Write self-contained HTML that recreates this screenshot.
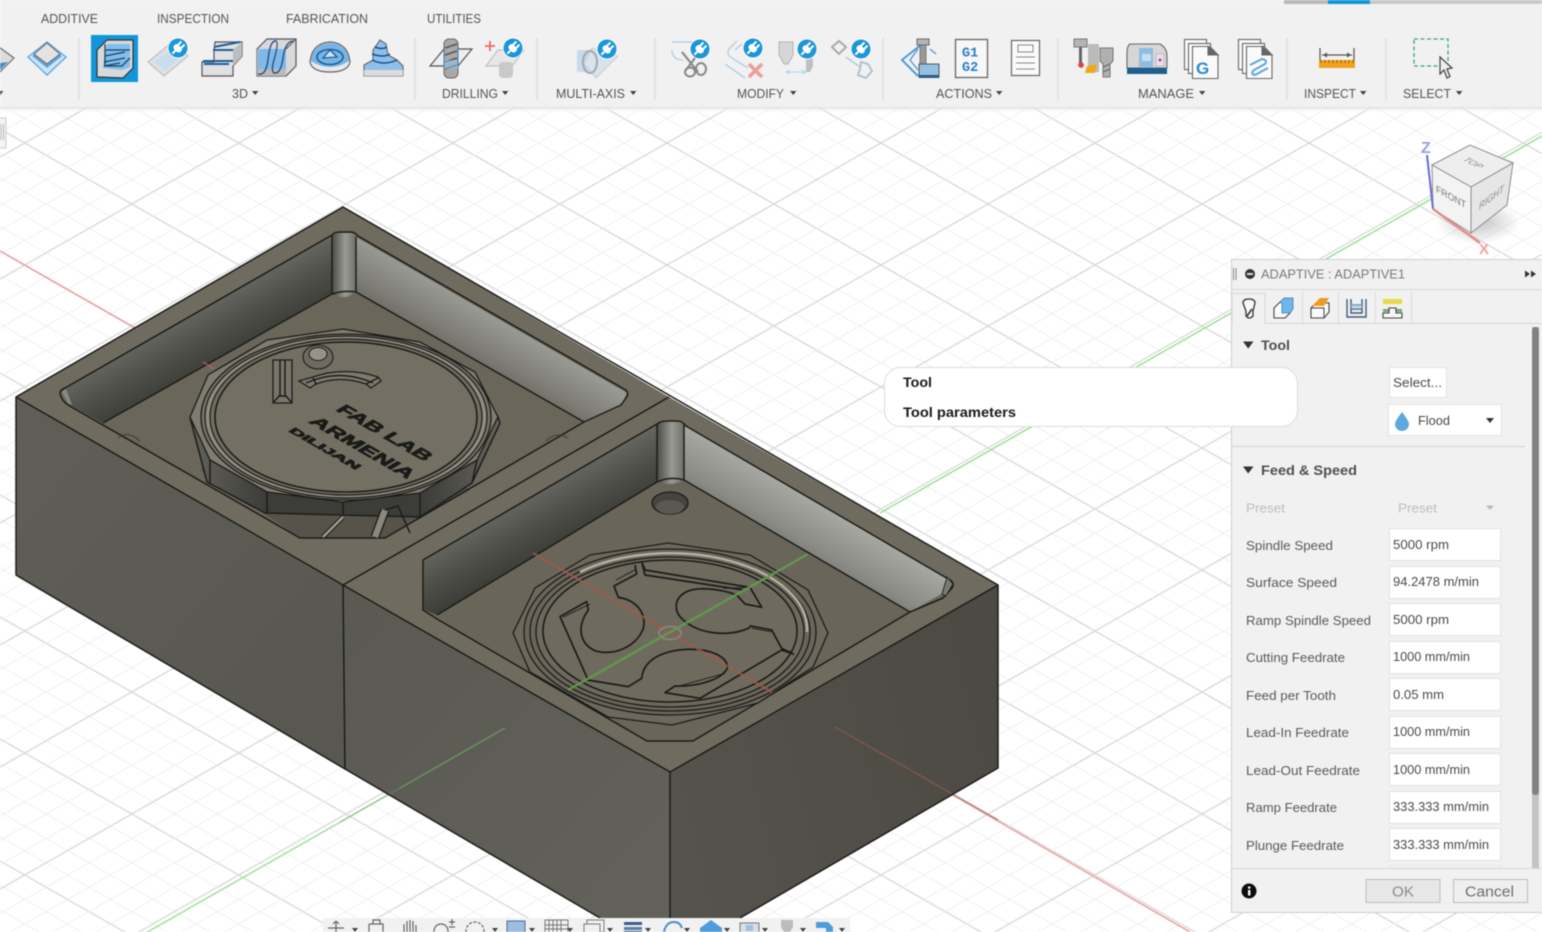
<!DOCTYPE html>
<html lang="en"><head><meta charset="utf-8"><title>ADAPTIVE</title>
<style>
html,body{margin:0;padding:0;width:1542px;height:932px;overflow:hidden;background:#fff}
svg{display:block;filter:blur(.55px)}
text{font-family:"Liberation Sans",sans-serif}
.tb{font-size:13px;fill:#555}
.lb{font-size:12.5px;fill:#5a5a5a}
.val{font-size:12.5px;fill:#4a4a4a}
.e{stroke:#1c1c1a;stroke-width:1.5;fill:none;stroke-linejoin:round}
.i{stroke:#555;stroke-width:1.2;stroke-linejoin:round}
</style></head><body>
<svg xmlns="http://www.w3.org/2000/svg" width="1542" height="932" viewBox="0 0 1542 932">
<defs>
<pattern id="ga" patternUnits="userSpaceOnUse" width="10" height="122" patternTransform="translate(1095,143) skewY(29.68)">
<g stroke="#f0f0f0" stroke-width="1.1"><path d="M0 24.4H10M0 48.8H10M0 73.2H10M0 97.6H10"/></g><path d="M0 0H10M0 122H10" stroke="#d8d8d8" stroke-width="1.5"/></pattern>
<pattern id="gb" patternUnits="userSpaceOnUse" width="10" height="122" patternTransform="translate(1095,143) skewY(-29.68)">
<g stroke="#f0f0f0" stroke-width="1.1"><path d="M0 24.4H10M0 48.8H10M0 73.2H10M0 97.6H10"/></g><path d="M0 0H10M0 122H10" stroke="#d8d8d8" stroke-width="1.5"/></pattern>
<linearGradient id="fl" gradientUnits="userSpaceOnUse" x1="16" y1="420" x2="345" y2="700"><stop offset="0" stop-color="#5f5f57"/><stop offset="1" stop-color="#585850"/></linearGradient>
<linearGradient id="fm" gradientUnits="userSpaceOnUse" x1="345" y1="600" x2="670" y2="900"><stop offset="0" stop-color="#5a5a52"/><stop offset="1" stop-color="#62625a"/></linearGradient>
<linearGradient id="fr" gradientUnits="userSpaceOnUse" x1="670" y1="780" x2="998" y2="700"><stop offset="0" stop-color="#55534b"/><stop offset="1" stop-color="#4c4a43"/></linearGradient>
<linearGradient id="wl" gradientUnits="userSpaceOnUse" x1="190" y1="300" x2="225" y2="362"><stop offset="0" stop-color="#70706a"/><stop offset=".55" stop-color="#50504a"/><stop offset="1" stop-color="#3c3c37"/></linearGradient>
<linearGradient id="wr" gradientUnits="userSpaceOnUse" x1="490" y1="312" x2="455" y2="372"><stop offset="0" stop-color="#9c9c96"/><stop offset=".55" stop-color="#7c7c75"/><stop offset="1" stop-color="#5c5b52"/></linearGradient>
<linearGradient id="wl2" gradientUnits="userSpaceOnUse" x1="516" y1="490" x2="551" y2="552"><stop offset="0" stop-color="#70706a"/><stop offset=".55" stop-color="#50504a"/><stop offset="1" stop-color="#3c3c37"/></linearGradient>
<linearGradient id="wr2" gradientUnits="userSpaceOnUse" x1="816" y1="502" x2="781" y2="562"><stop offset="0" stop-color="#a8a8a2"/><stop offset=".55" stop-color="#8c8c86"/><stop offset="1" stop-color="#6c6b63"/></linearGradient>
<linearGradient id="fil" x1="0" x2="1" y1="0" y2="0"><stop offset="0" stop-color="#4b4b46"/><stop offset=".55" stop-color="#9a9a94"/><stop offset="1" stop-color="#6f6f68"/></linearGradient>
<linearGradient id="sk" gradientUnits="userSpaceOnUse" x1="188" y1="0" x2="500" y2="0"><stop offset="0" stop-color="#65645c"/><stop offset=".25" stop-color="#3c3c38"/><stop offset=".75" stop-color="#3c3c38"/><stop offset="1" stop-color="#65645c"/></linearGradient>
<radialGradient id="shad" cx=".5" cy=".5" r=".5"><stop offset="0" stop-color="#aaa" stop-opacity=".7"/><stop offset="1" stop-color="#aaa" stop-opacity="0"/></radialGradient>
<linearGradient id="tbs" x1="0" x2="0" y1="0" y2="1"><stop offset="0" stop-color="#ddd"/><stop offset="1" stop-color="#fff" stop-opacity="0"/></linearGradient>
<g id="plug"><circle r="10.5" fill="#fff" opacity=".8"/><circle r="9.5" fill="#1b96d6"/><g transform="rotate(45)" fill="#fff"><rect x="-4.5" y="-2.5" width="9" height="6" rx="2.5"/><rect x="-3.2" y="-7" width="2" height="5"/><rect x="1.2" y="-7" width="2" height="5"/><rect x="-1" y="3" width="2" height="5"/></g></g>
<path id="tri" d="M0 0h6.4l-3.2 4z" fill="#444"/>
</defs>

<!-- grid -->
<rect width="1542" height="932" fill="#fff"/>
<rect width="1542" height="932" fill="url(#ga)"/>
<rect width="1542" height="932" fill="url(#gb)"/>
<path d="M1542 136L880 513" stroke="#9ee29a" stroke-width="1.6"/>
<path d="M835 727L1190 932" stroke="#eda3a3" stroke-width="1.6"/>
<path d="M0 251L135 328" stroke="#eaa0a6" stroke-width="1.6"/>
<path d="M400 788L130 942" stroke="#a8e0a2" stroke-width="1.6"/>

<!-- model -->
<g>
<polygon points="16,397 343,585 345,769 16,575" fill="url(#fl)"/>
<polygon points="343,585 670,772 670,918 600,918 345,769" fill="url(#fm)"/>
<polygon points="670,772 998,585 998,768 740,918 670,918" fill="url(#fr)"/>
<polygon points="16,397 343,207 669,397 998,585 670,772 343,585" fill="#6f6b5f"/>
<path d="M505 728L400 788" stroke="#6fa85f" stroke-width="1.5" opacity=".7"/>
<path d="M400 788L340 822" stroke="#7a9a6c" stroke-width="1.3" opacity=".4"/>
<path d="M835 727L998 820" stroke="#9c5a50" stroke-width="1.5" opacity=".6"/>

<!-- left pocket -->
<polygon points="60,393 65,388 332,234 356,234 627,393 621,405 584,422 521,460 385,538 300,538 111,429 68,405" fill="#6b665a"/>
<polygon points="300,538 385,538 470,490 360,395 200,470" fill="#57534a"/>
<polygon points="66,388 332,236 332,294 103,423 70,405" fill="url(#wl)"/>
<polygon points="356,237 627,393 621,405 584,422 356,292" fill="url(#wr)"/>
<path d="M332 236Q333 233 340 233H350Q355 233 356 237V292Q350 297 344 297Q335 297 332 294Z" fill="url(#fil)"/>
<path class="e" d="M60 393Q60 390 65 388L332 235Q334 232 340 232H350Q355 232 358 236L624 389Q630 392 626 398L621 405 584 422 385 538H300L68 405Q61 400 60 393Z"/>
<path class="e" d="M332 235V294M356 237V292M103 423L332 294Q344 290 356 292L584 422"/>
<path d="M68 403L62 392 66 389 72 405Z" fill="#8a8a84"/>
<path d="M118 438Q128 430 140 441" fill="none" stroke="#3a3a36" stroke-width="1"/>
<path d="M546 441Q556 431 568 438" fill="none" stroke="#3a3a36" stroke-width="1"/>
<!-- left coin -->
<polygon points="188,420 208,375 267,340 343,329 420,342 475,372 500,423 472,483 420,517 343,514 265,513 207,482" fill="url(#sk)"/>
<path class="e" stroke-width="1.2" d="M190 417L207 482M210 460V484M267 492V514M343 502V515M420 493V517M477 460L472 483M498 417L500 423M207 482L265 513 343 515 420 517 472 483 500 423"/>
<path d="M323 537L343 517" stroke="#1c1c1a" stroke-width="4.5"/><path d="M323 537L343 517" stroke="#a09c90" stroke-width="2.6"/>
<path d="M375 537L385 510" stroke="#1c1c1a" stroke-width="9"/><path d="M375 537L385 510" stroke="#8a877b" stroke-width="6.4"/>
<path class="e" stroke-width="1.2" d="M385 510L398 506 410 533"/>
<polygon points="190,417 208,375 267,340 343,329 420,342 475,372 498,417 477,460 420,493 343,502 267,492 210,460" fill="#7f7c70" stroke="#1c1c1a" stroke-width="1.3"/>
<ellipse cx="346" cy="417" rx="145" ry="83" fill="#757164" stroke="#1c1c1a" stroke-width="1.3"/>
<ellipse cx="346" cy="417" rx="141" ry="81" fill="#8f8c80" stroke="#1c1c1a" stroke-width="1.2"/>
<ellipse cx="346" cy="417" rx="136" ry="78" fill="#716d60" stroke="#1c1c1a" stroke-width="1.2"/>
<ellipse cx="346" cy="417" rx="131" ry="75" fill="#736f63" stroke="#1c1c1a" stroke-width="1.6"/>
<ellipse cx="318" cy="357" rx="15" ry="12" fill="#6e6a5f" stroke="#1c1c1a" stroke-width="1.1"/>
<ellipse cx="318" cy="354" rx="9" ry="6.5" fill="#96928a" stroke="#1c1c1a" stroke-width="1"/>
<path d="M273 360H292V403H273Z" fill="#79756a" stroke="#1c1c1a" stroke-width="1.3"/>
<path class="e" stroke-width="1" d="M280 360V397M285 360V397M273 403L279 396H286L292 403"/>
<path d="M299 381L313 377Q345 366 378 377L381 381 371 388 366 384Q340 375 316 384L310 388Z" fill="#7e7a6e" stroke="#1c1c1a" stroke-width="1.3"/>
<path class="e" stroke-width="1" d="M313 378L316 384M378 378L366 384M306 383Q340 368 373 383"/>
<g fill="#1a1a18" font-weight="700" stroke="#1a1a18" stroke-width="1">
<text transform="matrix(.87,.5,-.72,.42,335,410)" font-size="21" textLength="103" lengthAdjust="spacingAndGlyphs">FAB LAB</text>
<text transform="matrix(.87,.5,-.72,.42,308,422)" font-size="21" textLength="114" lengthAdjust="spacingAndGlyphs">ARMENIA</text>
<text transform="matrix(.87,.5,-.72,.42,288,431)" font-size="13" textLength="78" lengthAdjust="spacingAndGlyphs">DILIJAN</text>
</g>
<path d="M203 362L214 369" stroke="#c0606a" stroke-width="1.5" opacity=".8"/>

<!-- right pocket -->
<polygon points="423,560 657,424 683,424 953,583 947,595 910,612 693,741 647,741 437,619 423,611" fill="#6a6559"/>
<polygon points="423,560 657,425 657,482 437,615 423,609" fill="url(#wl2)"/>
<polygon points="683,425 947,578 943,593 910,612 683,480" fill="url(#wr2)"/>
<path d="M657 425Q660 421 668 421H678Q682 421 684 425V480Q676 484 670 484Q662 484 657 482Z" fill="url(#fil)"/>
<path class="e" d="M423 560L657 424Q660 421 668 421H678Q682 421 686 426L950 580Q955 583 952 588L943 598 910 612 693 741H647L437 619 423 610Z"/>
<path class="e" d="M657 424V482M684 425V480M437 615L657 482Q670 476 684 480L910 612"/>
<path d="M947 577L953 584 946 596 942 594Z" fill="#7a7a72" stroke="#1c1c1a" stroke-width=".9"/>
<ellipse cx="670" cy="503" rx="18" ry="11" fill="#45443f" stroke="#1c1c1a" stroke-width="1.3"/>
<ellipse cx="670" cy="507" rx="14" ry="7" fill="#5a5850"/>
<!-- right coin -->
<polygon points="513,633 535,588 590,555 668,543 750,555 808,590 828,633 813,667 758,703 672,725 608,717 530,672" fill="#6d685c" stroke="#1c1c1a" stroke-width="1.3"/>
<ellipse cx="670" cy="632" rx="146" ry="83" fill="#6a6559" stroke="#1c1c1a" stroke-width="1.3"/>
<ellipse cx="670" cy="632" rx="140" ry="79" fill="none" stroke="#1c1c1a" stroke-width="1.3"/>
<path d="M580 572A137 76 0 0 1 807 632" fill="none" stroke="#b5b1a4" stroke-width="2.4"/>
<ellipse cx="670" cy="632" rx="134" ry="75" fill="#6e695d" stroke="#1c1c1a" stroke-width="1.3"/>
<ellipse cx="670" cy="631" rx="127" ry="71" fill="#6f6a5e" stroke="#1c1c1a" stroke-width="1.6"/>
<g transform="translate(480,500) scale(.33333)" fill="none" stroke="#1c1c1a" stroke-width="5.2" stroke-linejoin="round">
<path d="M465 195L470 222 402 258 415 292C470 300 500 340 490 385C470 440 400 470 345 452C300 432 288 380 325 330L320 305 240 350 322 535"/>
<path d="M322 540L445 560 485 535C490 480 545 452 620 448C690 445 745 470 742 505C720 545 640 560 585 558L555 578 660 595 880 465 905 450 940 462 905 445 875 390 812 378 805 385C750 410 660 405 610 360C580 335 580 295 620 275C650 260 720 265 770 285L795 312 845 322 810 262 495 210 485 185 495 225 790 270"/>
<path stroke-width="2.8" d="M248 352L330 312M468 208L408 240M310 545L330 535M590 560L735 520M815 385L875 395M905 450L935 455M730 265L805 262"/>
</g>
<path d="M533 553L772 692" stroke="#a3594a" stroke-width="2.2" opacity=".75"/>
<path d="M808 554L568 690" stroke="#5f9f4c" stroke-width="2.4" opacity=".9"/>
<ellipse cx="670" cy="633" rx="11" ry="6.5" fill="none" stroke="#8a8276" stroke-width="2"/>

<!-- body edges -->
<path class="e" d="M16 397L343 207 998 585 670 772 343 585 16 397V575L345 769 600 918M343 585L345 769M670 772V918M998 585V768L740 918M343 585L669 397"/>
</g>

<!-- toolbar -->
<rect y="107" width="1542" height="6" fill="url(#tbs)"/>
<rect width="1542" height="107" fill="#f1f1f1"/>
<rect x="1284" y="0" width="44" height="4" fill="#b9b9b9"/><rect x="1328" y="0" width="42" height="4" fill="#0f96d9"/><rect x="1370" y="0" width="172" height="4" fill="#c9c9c9"/>
<g stroke="#e0e0e0" stroke-width="1.5"><path d="M79 38V100M415 38V100M537 38V100M655 38V100M883 38V100M1058 38V100M1287 38V100M1386 38V100"/></g>

<text class="tb" x="41" y="23" textLength="57" lengthAdjust="spacingAndGlyphs">ADDITIVE</text>
<text class="tb" x="157" y="23" textLength="72" lengthAdjust="spacingAndGlyphs">INSPECTION</text>
<text class="tb" x="286" y="23" textLength="82" lengthAdjust="spacingAndGlyphs">FABRICATION</text>
<text class="tb" x="427" y="23" textLength="54" lengthAdjust="spacingAndGlyphs">UTILITIES</text>
<text class="tb" x="232" y="98" textLength="16" lengthAdjust="spacingAndGlyphs">3D</text><use href="#tri" x="252" y="91"/>
<text class="tb" x="442" y="98" textLength="56" lengthAdjust="spacingAndGlyphs">DRILLING</text><use href="#tri" x="502" y="91"/>
<text class="tb" x="556" y="98" textLength="69" lengthAdjust="spacingAndGlyphs">MULTI-AXIS</text><use href="#tri" x="630" y="91"/>
<text class="tb" x="737" y="98" textLength="47" lengthAdjust="spacingAndGlyphs">MODIFY</text><use href="#tri" x="790" y="91"/>
<text class="tb" x="936" y="98" textLength="56" lengthAdjust="spacingAndGlyphs">ACTIONS</text><use href="#tri" x="996" y="91"/>
<text class="tb" x="1138" y="98" textLength="56" lengthAdjust="spacingAndGlyphs">MANAGE</text><use href="#tri" x="1199" y="91"/>
<text class="tb" x="1304" y="98" textLength="52" lengthAdjust="spacingAndGlyphs">INSPECT</text><use href="#tri" x="1360" y="91"/>
<text class="tb" x="1403" y="98" textLength="48" lengthAdjust="spacingAndGlyphs">SELECT</text><use href="#tri" x="1456" y="91"/>
<use href="#tri" x="-3" y="91"/>

<!-- icon: clipped cube at left -->
<polygon points="-8,42 14,58 -2,74 -14,60" fill="#dcdcdc" stroke="#666" stroke-width="1.1"/>
<polygon points="-6,64 8,62 0,70" fill="#3b8fcf"/>
<!-- diamond -->
<polygon points="28,57 47,75 66,57 47,42" fill="#cfe5f7" stroke="#5fabe4" stroke-width="1.4"/>
<polygon points="32,56 47,68 62,56 47,44" fill="#5aa5e0"/>
<polygon points="34,54 47,64 60,54 47,43" fill="#e3e3e3" stroke="#666" stroke-width="1"/>
<!-- selected -->
<rect x="91" y="35" width="47" height="47" fill="#1296d8"/>
<polygon points="97,50 107,40 133,40 133,68 123,78 97,77" fill="#d9d9d9" stroke="#333" stroke-width="1.2"/>
<polygon points="107,44 130,44 130,67 122,70 103,68 105,52" fill="#7fbfee"/>
<path d="M105 44V66H122L130 58M106 50H130M105 56L125 52M104 62L125 58M104 66L120 63" stroke="#1e3f66" stroke-width="1.3" fill="none"/>
<!-- plug icon faded -->
<g opacity=".55"><polygon points="148,62 172,42 188,56 164,76" fill="#cbd5dd" stroke="#8a8a8a" stroke-width="1"/><polygon points="155,62 170,50 180,58 165,70" fill="#a9cee9"/></g>
<use href="#plug" x="178" y="48"/>
<!-- stairs -->
<polygon points="215,42 242,42 242,56 233,66 233,76 202,76 202,62 214,62 214,50" fill="#e1e1e1" stroke="#555" stroke-width="1.2"/>
<path d="M214 47L240 42M213 50H238M204 64H229M203 61H233" stroke="#1d5f9e" stroke-width="2" fill="none"/>
<polygon points="233,50 242,42 242,56 233,66" fill="#bdbdbd"/>
<!-- parallel -->
<polygon points="257,49 267,39 296,39 296,66 286,76 257,76" fill="#d9d9d9" stroke="#555" stroke-width="1.2"/>
<polygon points="257,49 286,49 286,76 257,76" fill="#bbb"/>
<polygon points="258,49 286,49 286,69 258,69" fill="#7fb9e8"/>
<path d="M258 74Q266 76 268 60Q270 40 276 41Q279 42 274 60Q270 74 276 73Q281 72 283 58Q285 42 293 41" stroke="#1f4a7a" stroke-width="1.3" fill="none"/>
<path d="M286 49L296 39" stroke="#555" stroke-width="1.1"/>
<!-- dome -->
<path d="M310 62Q312 43 330 42Q348 43 350 62Q348 72 330 72Q312 72 310 62Z" fill="#e9e9e9" stroke="#666" stroke-width="1.2"/>
<path d="M311 61Q313 44 330 43Q347 44 349 61Q340 67 330 67Q320 67 311 61Z" fill="#77b4e6"/>
<ellipse cx="330" cy="57" rx="13" ry="7.5" fill="none" stroke="#1f5c98" stroke-width="1.6"/>
<path d="M330 50L337 57 323 58Z" fill="#cfe3f5" stroke="#1f5c98" stroke-width="1.3"/>
<!-- pyramid -->
<polygon points="364,76 364,65 373,60 373,50 380,40 386,44 388,55 397,60 403,66 403,76" fill="#8fc0ea" stroke="#666" stroke-width="1.1"/>
<polygon points="364,70 403,70 403,76 364,76" fill="#dcdcdc"/>
<path d="M372 60Q384 66 397 60M372 54Q384 58 390 54M375 47Q382 50 387 47" stroke="#164f8a" stroke-width="1.5" fill="none"/>
<!-- drill -->
<polygon points="430,66 444,49 472,49 458,66" fill="#eee" stroke="#555" stroke-width="1.2"/>
<rect x="444" y="39" width="14" height="39" rx="5" fill="#a9a9a9" stroke="#666" stroke-width="1"/>
<path d="M445 48L457 44M445 55L457 51M445 62L457 58M445 69L457 65" stroke="#555" stroke-width="1.5"/>
<rect x="444" y="60" width="14" height="9" fill="#8ec2ec" opacity=".55"/>
<path d="M444 51V66M458 49V66" stroke="#2b7fc2" stroke-width="1"/>
<!-- plus plug -->
<g opacity=".55"><polygon points="486,66 498,50 524,50 512,66" fill="#e0e0e0" stroke="#888"/><rect x="499" y="62" width="14" height="16" rx="4" fill="#aaa"/></g>
<path d="M490 41V51M485 46H495" stroke="#ea6b6b" stroke-width="1.8"/>
<use href="#plug" x="513" y="48"/>
<!-- multi axis -->
<g opacity=".6"><polygon points="577,50 598,50 598,72 577,72" fill="#a8cdec"/><polygon points="592,48 618,56 596,78 584,64" fill="#c6dcee" stroke="#aaa" stroke-width=".8"/><ellipse cx="590" cy="62" rx="7" ry="11" fill="none" stroke="#777" stroke-width="2"/></g>
<use href="#plug" x="607" y="49"/>
<!-- scissors -->
<g opacity=".85"><path d="M672 42H694M672 50Q672 60 683 60" stroke="#9fc6e5" stroke-width="1.2" fill="none"/><path d="M682 52L698 72M698 54L686 70" stroke="#777" stroke-width="2.2"/><ellipse cx="690" cy="72" rx="5" ry="4.5" fill="none" stroke="#777" stroke-width="2"/><ellipse cx="701" cy="69" rx="5" ry="6" fill="none" stroke="#777" stroke-width="2"/></g>
<use href="#plug" x="700" y="49"/>
<!-- path x -->
<g opacity=".8"><path d="M725 64L745 78M737 41L730 48Q725 54 732 58L748 68M742 44L735 50" stroke="#a6c7e0" stroke-width="1.4" fill="none"/><path d="M749 64L762 77M762 64L749 77" stroke="#e78a86" stroke-width="3.6"/></g>
<use href="#plug" x="753" y="48"/>
<!-- tool offset -->
<g opacity=".7"><path d="M779 42H793V55L788 64H784L779 55Z" fill="#ccc" stroke="#999"/><path d="M806 58H813V66L810 72H806Z" fill="#aaa"/><path d="M786 72H806M786 72L790 70M786 72L790 74M806 72L802 70M806 72L802 74" stroke="#9cc8e8" stroke-width="1"/></g>
<use href="#plug" x="807" y="49"/>
<!-- diamonds -->
<g opacity=".8"><path d="M860 69L861 62 868 64 872 71 866 78 858 75Z" fill="none" stroke="#9db8cc" stroke-width="2"/><path d="M846 57L860 67" stroke="#9cc8e8" stroke-width="1.6"/><path d="M832 47L839 41 846 47 839 54Z" fill="none" stroke="#999" stroke-width="2"/></g>
<use href="#plug" x="861" y="49"/>
<!-- setup diamond -->
<path d="M922 44L902 60 918 76" fill="none" stroke="#4f9bd9" stroke-width="2"/><path d="M918 49L910 60 918 70M930 49L936 54" fill="none" stroke="#4f9bd9" stroke-width="1.4"/>
<rect x="917" y="39" width="12" height="6" fill="#b5b5b5" stroke="#666"/><rect x="920" y="45" width="6" height="21" fill="#999" stroke="#666" stroke-width=".8"/>
<rect x="919" y="64" width="20" height="13" fill="#93c0e3" stroke="#555"/><rect x="919" y="75" width="20" height="3" fill="#2a5c8a"/>
<!-- G1G2 -->
<rect x="955.5" y="39.5" width="32" height="38" fill="#f7f7f7" stroke="#666" stroke-width="1.3"/>
<text x="962" y="56.5" font-size="13.5" font-weight="700" style="font-family:'Liberation Mono',monospace" fill="#2a7fc4">G1</text>
<text x="962" y="71" font-size="13.5" font-weight="700" style="font-family:'Liberation Mono',monospace" fill="#2a7fc4">G2</text>
<!-- doc -->
<rect x="1011.5" y="40.5" width="28" height="35" fill="#fafafa" stroke="#666" stroke-width="1.2"/>
<rect x="1018" y="45" width="15" height="7" fill="none" stroke="#888"/><path d="M1016 57H1035M1016 63H1035M1016 69H1035" stroke="#888"/>
<!-- tools -->
<rect x="1074" y="39" width="13" height="8" fill="#b5b5b5" stroke="#777"/><rect x="1079" y="47" width="3" height="17" fill="#666"/><circle cx="1081" cy="65" r="2.8" fill="#e0403a"/>
<rect x="1088" y="44" width="11" height="28" fill="#bbb"/><polygon points="1087,66 1097,64 1095,73 1085,73" fill="#f0a818"/>
<path d="M1100 48H1113V61L1110 64V77H1103V64L1100 61Z" fill="#b0b0b0" stroke="#777"/><path d="M1103 67L1110 64M1103 72L1110 69" stroke="#666" stroke-width="1.2"/>
<!-- machine -->
<path d="M1130 44H1160Q1167 48 1167 56V68H1127V52Q1127 46 1130 44Z" fill="#d6d6d6" stroke="#666" stroke-width="1.1"/>
<rect x="1127" y="68" width="40" height="6" fill="#1f5f90"/><rect x="1139" y="48" width="14" height="19" fill="#8dbde3"/><rect x="1142" y="54" width="9" height="7" fill="#c9def0"/><rect x="1156" y="54" width="8" height="12" fill="#e8e0ea" stroke="#aaa" stroke-width=".6"/><circle cx="1160" cy="60" r="1.5" fill="#c23a8a"/>
<!-- G docs -->
<g fill="#fafafa" stroke="#666" stroke-width="1.1"><rect x="1184.5" y="39.5" width="22" height="30"/><rect x="1188.5" y="43.5" width="22" height="30"/><path d="M1192.5 46.5H1210L1218 55V78.5H1192.5Z"/><path d="M1208 46.5L1218 55H1208Z" fill="#666"/></g>
<text x="1196" y="74" font-size="17" font-weight="700" fill="#2a8ad0">G</text>
<!-- S docs -->
<g fill="#fafafa" stroke="#666" stroke-width="1.1"><rect x="1238.5" y="39.5" width="22" height="30"/><rect x="1242.5" y="43.5" width="22" height="30"/><path d="M1246.5 46.5H1264L1272 55V78.5H1246.5Z"/><path d="M1262 46.5L1272 55H1262Z" fill="#666"/></g>
<path d="M1250 65L1262 59Q1268 60 1265 64L1254 70Q1250 74 1255 75L1268 68" fill="none" stroke="#5aa5df" stroke-width="2"/>
<!-- ruler -->
<path d="M1320 48V62M1354 48V62M1322 55H1352" stroke="#555" stroke-width="1.2"/><path d="M1323 55L1327 52.5V57.5ZM1351 55L1347 52.5V57.5Z" fill="#555"/>
<rect x="1319" y="60" width="36" height="8" fill="#f0a21e"/><path d="M1321 60V63M1325 60V63M1329 60V63M1333 60V63M1337 60V63M1341 60V63M1345 60V63M1349 60V63M1353 60V63" stroke="#8a6418"/>
<!-- select -->
<rect x="1414" y="39" width="34" height="27" fill="none" stroke="#3ba86f" stroke-width="1.3" stroke-dasharray="4 2.5"/>
<path d="M1440 57V74L1444 70 1447 78 1450 76.5 1447 69 1452 68Z" fill="#eee" stroke="#444" stroke-width="1.2"/>

<!-- left stub -->
<rect x="-2" y="118" width="8" height="30" fill="#f4f4f4" stroke="#ccc"/><path d="M1 124V140M3.5 124V140" stroke="#999" stroke-width=".7"/>

<!-- nav cube -->
<ellipse cx="1478" cy="222" rx="42" ry="22" fill="url(#shad)"/>
<polygon points="1432,165 1470,145 1513,163 1471,187" fill="#eeeeee" stroke="#8c8c8c" stroke-width="1"/>
<polygon points="1432,165 1471,187 1471,233 1433,209" fill="#f3f3f3" stroke="#8c8c8c" stroke-width="1"/>
<polygon points="1471,187 1513,163 1507,205 1471,233" fill="#e6e6e6" stroke="#8c8c8c" stroke-width="1"/>
<text transform="matrix(.87,.45,-.87,.45,1462,160)" font-size="9.5" font-style="italic" fill="#888">TOP</text>
<text transform="matrix(.87,.48,0,1,1436,192)" font-size="10" fill="#777">FRONT</text>
<text transform="matrix(.8,-.6,0,1,1479,210)" font-size="10" font-style="italic" fill="#888">RIGHT</text>
<path d="M1427 155L1433 209" stroke="#6a6ad8" stroke-width="2"/>
<path d="M1433 209L1480 243" stroke="#e58a8a" stroke-width="2.4"/>
<text x="1421" y="153" font-size="16" font-weight="700" fill="#9c9cf0">Z</text>
<text x="1479" y="254" font-size="15" font-weight="700" fill="#f5a0a0">X</text>

<!-- panel -->
<rect x="1231.5" y="259.5" width="312" height="653" fill="#f1f1f1" stroke="#cfcfcf"/>
<path d="M1232 289.5H1542M1232 323.5H1542" stroke="#d6d6d6"/>
<path d="M1233.5 268V280M1236 268V280" stroke="#888"/>
<circle cx="1250" cy="274" r="5" fill="#333"/><rect x="1247" y="273" width="6" height="2" fill="#ddd"/>
<text x="1261" y="278.5" font-size="13" fill="#7a7a7a" textLength="144" lengthAdjust="spacingAndGlyphs">ADAPTIVE : ADAPTIVE1</text>
<path d="M1525 270.5L1530 274 1525 277.5ZM1531 270.5L1536 274 1531 277.5Z" fill="#333"/>
<path d="M1232 324V293.5H1265V324" fill="#f1f1f1" stroke="#d6d6d6"/><rect x="1232.5" y="320" width="32" height="6" fill="#f1f1f1"/>
<path d="M1302.5 292V323M1338.5 292V323M1375.5 292V323M1411.5 292V323" stroke="#ddd"/>
<path d="M1243 303Q1243 299 1249 299Q1255 299 1255 303L1253 311V316Q1249 320 1246 316L1246 311Z" fill="#f8f8f8" stroke="#333" stroke-width="1.3"/><path d="M1247 316L1252 309" stroke="#333" stroke-width="1.6"/>
<path d="M1274 308L1280 302H1290V313L1285 318H1274Z" fill="#fafafa" stroke="#444" stroke-width="1.1"/><path d="M1280 302L1284 298H1293V309L1290 313H1282V304Z" fill="#6db7ea" stroke="#3c7fb5" stroke-width=".8"/>
<path d="M1311 308L1316 303H1329V312L1324 318H1311Z" fill="#fafafa" stroke="#444" stroke-width="1.1"/><path d="M1312 306L1320 298H1329L1324 306Z" fill="#ef9a22"/><path d="M1311 308H1324V318" fill="none" stroke="#444" stroke-width="1"/>
<path d="M1347 299V317H1366V299M1351 299V313H1362V299M1351 305H1362M1351 309H1362" fill="none" stroke="#3d5a7a" stroke-width="1.4"/><rect x="1351" y="304" width="11" height="5" fill="#a7cdea" opacity=".6"/>
<rect x="1383" y="299" width="19" height="5" fill="#e8d94a"/><rect x="1383" y="309" width="19" height="3" fill="#67b26a"/><path d="M1383 318V313H1389V308H1396V313H1402V318ZM1383 318H1402" fill="#f6f6f6" stroke="#444" stroke-width="1.1"/>

<rect x="1532" y="327" width="7" height="541" fill="#c4c4c4"/><rect x="1532" y="327" width="7" height="468" rx="3" fill="#828282"/>

<path d="M1243 341.5H1253.5L1248.2 348.5Z" fill="#333"/>
<text x="1261" y="350" font-size="13.5" font-weight="700" fill="#4f4f4f" textLength="29" lengthAdjust="spacingAndGlyphs">Tool</text>
<rect x="1389.5" y="367.5" width="57" height="30" fill="#fff" stroke="#e2e2e2"/>
<text x="1393" y="387" class="val" textLength="49" lengthAdjust="spacingAndGlyphs">Select...</text>
<rect x="1388.5" y="404.5" width="113" height="31" fill="#fff" stroke="#e2e2e2"/>
<path d="M1402 412Q1409 421 1409 424A7 7 0 0 1 1395 424Q1395 421 1402 412Z" fill="#5fa8de"/>
<text x="1418" y="425" class="val" textLength="32" lengthAdjust="spacingAndGlyphs">Flood</text>
<path d="M1486 418H1494L1490 423Z" fill="#333"/>
<path d="M1232 446.5H1525" stroke="#d8d8d8" stroke-width="1.3"/>
<path d="M1243 466.5H1253.5L1248.2 473.5Z" fill="#333"/>
<text x="1261" y="475" font-size="13.5" font-weight="700" fill="#4f4f4f" textLength="96" lengthAdjust="spacingAndGlyphs">Feed &amp; Speed</text>
<text x="1246" y="512.5" class="lb" style="fill:#bdbdbd" textLength="39" lengthAdjust="spacingAndGlyphs">Preset</text>
<text x="1398" y="512.5" class="lb" style="fill:#bdbdbd" textLength="39" lengthAdjust="spacingAndGlyphs">Preset</text>
<path d="M1486 505.5H1494L1490 510Z" fill="#bbb"/>

<g fill="#fff" stroke="#e2e2e2">
<rect x="1389.5" y="528.5" width="111" height="32"/><rect x="1389.5" y="566.5" width="111" height="32"/><rect x="1389.5" y="603.5" width="111" height="32"/><rect x="1389.5" y="641.5" width="111" height="32"/><rect x="1389.5" y="678.5" width="111" height="32"/><rect x="1389.5" y="716.5" width="111" height="32"/><rect x="1389.5" y="753.5" width="111" height="32"/><rect x="1389.5" y="791.5" width="111" height="32"/><rect x="1389.5" y="828.5" width="111" height="32"/><rect x="1389.5" y="866" width="111" height="2"/>
</g>
<text class="lb" x="1246" y="550" textLength="87" lengthAdjust="spacingAndGlyphs">Spindle Speed</text>
<text class="lb" x="1246" y="587" textLength="91" lengthAdjust="spacingAndGlyphs">Surface Speed</text>
<text class="lb" x="1246" y="625" textLength="125" lengthAdjust="spacingAndGlyphs">Ramp Spindle Speed</text>
<text class="lb" x="1246" y="662" textLength="99" lengthAdjust="spacingAndGlyphs">Cutting Feedrate</text>
<text class="lb" x="1246" y="700" textLength="90" lengthAdjust="spacingAndGlyphs">Feed per Tooth</text>
<text class="lb" x="1246" y="737" textLength="103" lengthAdjust="spacingAndGlyphs">Lead-In Feedrate</text>
<text class="lb" x="1246" y="775" textLength="114" lengthAdjust="spacingAndGlyphs">Lead-Out Feedrate</text>
<text class="lb" x="1246" y="812" textLength="91" lengthAdjust="spacingAndGlyphs">Ramp Feedrate</text>
<text class="lb" x="1246" y="850" textLength="98" lengthAdjust="spacingAndGlyphs">Plunge Feedrate</text>
<text class="val" x="1393" y="549" textLength="56" lengthAdjust="spacingAndGlyphs">5000 rpm</text>
<text class="val" x="1393" y="586" textLength="86" lengthAdjust="spacingAndGlyphs">94.2478 m/min</text>
<text class="val" x="1393" y="624" textLength="56" lengthAdjust="spacingAndGlyphs">5000 rpm</text>
<text class="val" x="1393" y="661" textLength="77" lengthAdjust="spacingAndGlyphs">1000 mm/min</text>
<text class="val" x="1393" y="699" textLength="51" lengthAdjust="spacingAndGlyphs">0.05 mm</text>
<text class="val" x="1393" y="736" textLength="77" lengthAdjust="spacingAndGlyphs">1000 mm/min</text>
<text class="val" x="1393" y="774" textLength="77" lengthAdjust="spacingAndGlyphs">1000 mm/min</text>
<text class="val" x="1393" y="811" textLength="96" lengthAdjust="spacingAndGlyphs">333.333 mm/min</text>
<text class="val" x="1393" y="849" textLength="96" lengthAdjust="spacingAndGlyphs">333.333 mm/min</text>

<rect x="1232" y="868" width="310" height="44" fill="#f1f1f1"/>
<path d="M1232 868.5H1542" stroke="#d6d6d6"/>
<circle cx="1249" cy="891" r="7.5" fill="#0d0d0d"/><rect x="1248" y="890" width="2.4" height="5.5" fill="#fff"/><rect x="1248" y="886.5" width="2.4" height="2.2" fill="#fff"/>
<rect x="1366" y="879.5" width="74" height="23" fill="#e7e7e7" stroke="#bdbdbd"/>
<text x="1392" y="896.5" font-size="15" fill="#8a8a8a" textLength="22" lengthAdjust="spacingAndGlyphs">OK</text>
<rect x="1453.5" y="879.5" width="74" height="23" fill="#efefef" stroke="#bdbdbd"/>
<text x="1465" y="896.5" font-size="15" fill="#6c6c6c" textLength="49" lengthAdjust="spacingAndGlyphs">Cancel</text>

<!-- tooltip -->
<rect x="884.5" y="367.5" width="413" height="59" rx="16" fill="#fff" stroke="#dcdcdc"/>
<text x="903" y="387" font-size="14" font-weight="700" fill="#1a1a1a" textLength="29" lengthAdjust="spacingAndGlyphs">Tool</text>
<text x="903" y="417" font-size="14" font-weight="700" fill="#1a1a1a" textLength="113" lengthAdjust="spacingAndGlyphs">Tool parameters</text>

<!-- bottom nav -->
<rect x="323" y="918" width="527" height="14" fill="#f1f1f1"/>
<g fill="none" stroke="#666" stroke-width="1.2">
<path d="M336 921V932M328 928H344M336 921L333 924M336 921L339 924"/>
<path d="M369 924H383V932M369 924V932M373 924V920H380V924"/>
<path d="M404 932V924M407 932V921M410 932V920M413 932V921M416 932V925"/>
<circle cx="441" cy="931" r="7"/><path d="M449 922H455M452 919V925M449 927H455"/>
<circle cx="475" cy="931" r="9" stroke-dasharray="3 1.5"/>
</g>
<rect x="507" y="921" width="18" height="12" fill="#9dbde0" stroke="#4c6c92"/>
<g fill="none" stroke="#777"><path d="M545 920H568V932M545 920V932M549 920V932M553 920V932M557 920V932M561 920V932M545 925H568M545 929H568"/><rect x="584" y="924" width="16" height="10"/><path d="M587 924V920H604V932H600"/></g>
<rect x="624" y="922" width="18" height="3" fill="#3d5e8c"/><rect x="624" y="927" width="18" height="3" fill="#5d7ea8"/><rect x="624" y="931" width="18" height="2" fill="#3d5e8c"/>
<path d="M664 932Q666 922 674 922Q680 922 682 928" fill="none" stroke="#4f8fcb" stroke-width="2"/>
<path d="M711 920L722 928V932H700V928Z" fill="#4d9ddd"/>
<rect x="740" y="923" width="19" height="10" fill="#d8dfe6" stroke="#777"/><rect x="746" y="925" width="7" height="6" fill="#9bc3e6"/>
<path d="M781 920H793V927L790 932H784L781 927Z" fill="#bcbcbc"/>
<path d="M816 922H828L833 927V932H826V928H816Z" fill="#4d9ddd"/>
<g fill="#444"><path d="M352 928h6l-3 4zM492 928h6l-3 4zM529 928h6l-3 4zM567 928h6l-3 4zM607 928h6l-3 4zM645 928h6l-3 4zM684 928h6l-3 4zM724 928h6l-3 4zM762 928h6l-3 4zM800 928h6l-3 4zM839 928h6l-3 4z"/></g>
</svg>
</body></html>
